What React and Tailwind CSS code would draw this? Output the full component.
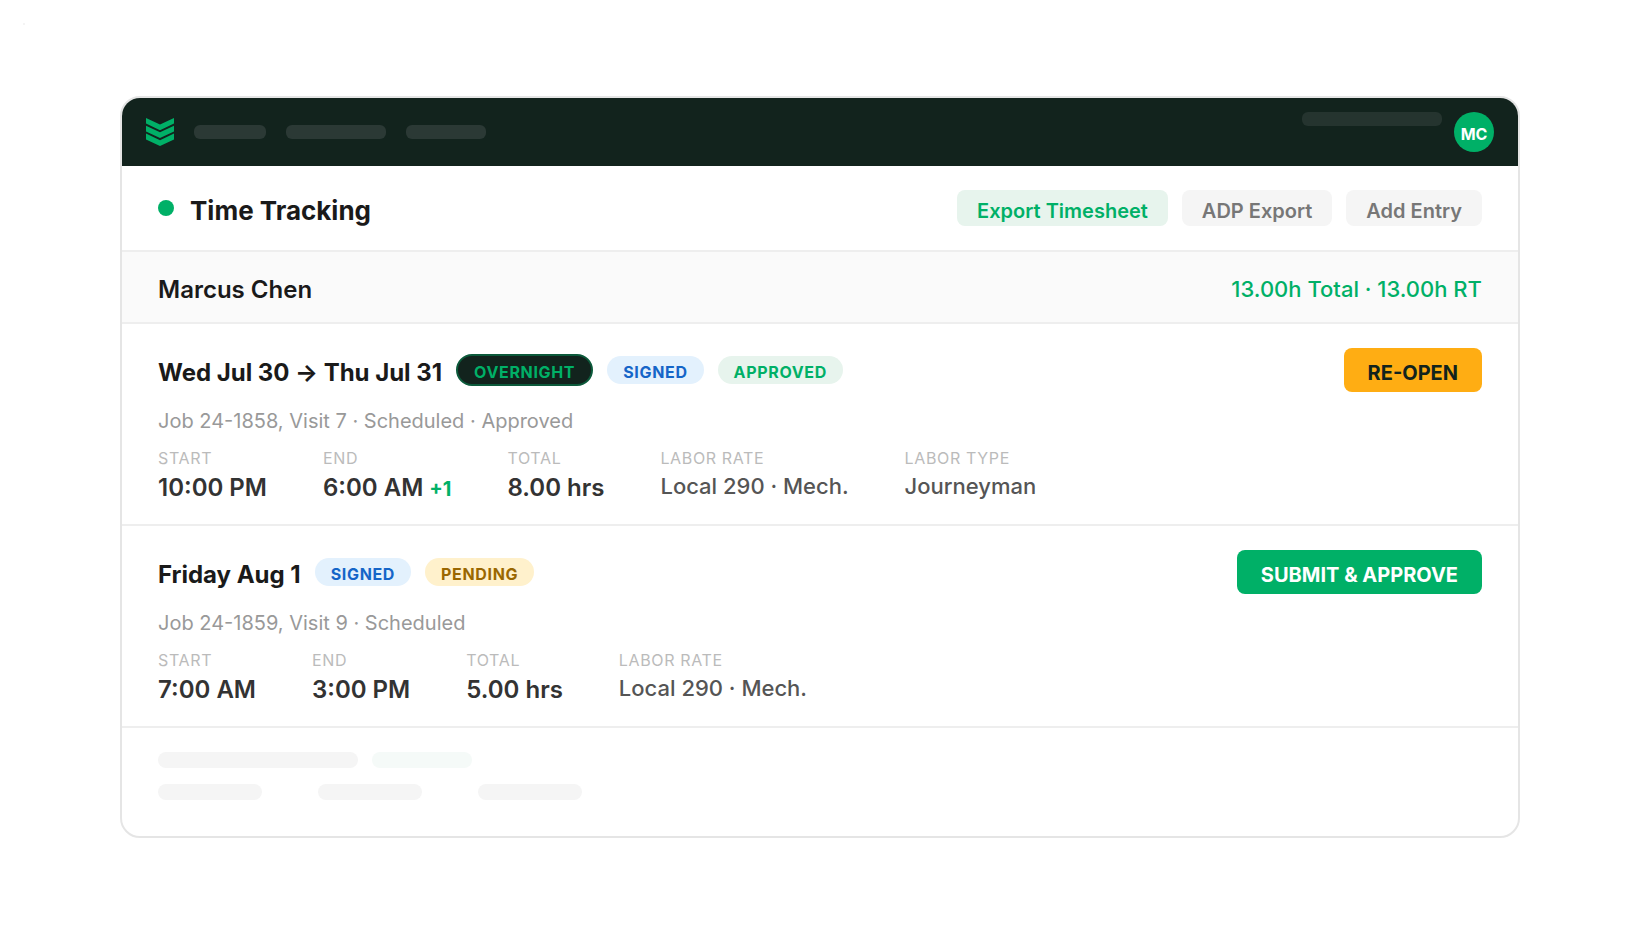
const BADGES = {
  overnight: 'h-8 border-2 border-[#0c5a3b] bg-[#12231d] text-[#00b067]',
  signed: 'h-7 bg-[#e3f1fd] text-[#1565c8]',
  approved: 'h-7 bg-[#e7f4ed] text-[#00b067]',
  pending: 'h-7 bg-[#fff1cc] text-[#9a6700]',
}

const ENTRIES = [
  {
    title: 'Wed Jul 30 → Thu Jul 31',
    badges: ['overnight', 'signed', 'approved'],
    meta: 'Job 24-1858, Visit 7 · Scheduled · Approved',
    action: 'RE-OPEN',
    actionClass: 'bg-[#ffad13] text-[#12231d]',
    fields: [
      { label: 'Start', value: '10:00 PM', strong: true },
      { label: 'End', value: '6:00 AM', extra: '+1', strong: true },
      { label: 'Total', value: '8.00 hrs', strong: true },
      { label: 'Labor rate', value: 'Local 290 · Mech.' },
      { label: 'Labor type', value: 'Journeyman' },
    ],
  },
  {
    title: 'Friday Aug 1',
    badges: ['signed', 'pending'],
    meta: 'Job 24-1859, Visit 9 · Scheduled',
    action: 'SUBMIT & APPROVE',
    actionClass: 'bg-[#00b067] text-white',
    fields: [
      { label: 'Start', value: '7:00 AM', strong: true },
      { label: 'End', value: '3:00 PM', strong: true },
      { label: 'Total', value: '5.00 hrs', strong: true },
      { label: 'Labor rate', value: 'Local 290 · Mech.' },
    ],
  },
]

function Logo() {
  return (
    <svg viewBox="0 0 28 28" className="w-7 h-7 shrink-0" fill="#00b067">
      <path d="M0 0 14 6.5 28 0V5.5L14 12.2 0 5.5Z" />
      <path d="M0 7.7 14 14.3 28 7.7V13.4L14 20 0 13.4Z" />
      <path d="M0 15.6 14 22.2 28 15.6V21.4L14 28 0 21.4Z" />
    </svg>
  )
}

function Badge({ kind }) {
  return (
    <span
      className={`flex items-center rounded-full px-4 pt-[3px] text-base leading-none font-bold tracking-[0.66px] uppercase ${BADGES[kind]}`}
    >
      {kind}
    </span>
  )
}

function Field({ field }) {
  return (
    <div>
      <div className="h-5 text-base leading-5 tracking-[0.64px] text-[#bbb] uppercase">{field.label}</div>
      {field.strong ? (
        <div className="mt-[5px] text-2xl leading-[29px] font-semibold text-[#333]">
          {field.value}
          {field.extra && <span className="ml-1.5 text-xl leading-none font-bold text-[#00b067]">{field.extra}</span>}
        </div>
      ) : (
        <div className="mt-[5px] text-[22px] leading-[27px] font-medium text-[#555]">{field.value}</div>
      )}
    </div>
  )
}

function Entry({ entry }) {
  return (
    <section className="h-[202px] border-b-2 border-[#eee] px-9 pt-6">
      <div className="flex h-11 items-center justify-between">
        <div className="flex h-11 items-center gap-3.5">
          <h2 className="pt-1.5 text-2xl leading-[30px] font-bold tracking-[-0.02px] text-[#1a1a1a]">{entry.title}</h2>
          {entry.badges.map((kind) => (
            <Badge key={kind} kind={kind} />
          ))}
        </div>
        <button className={`h-11 rounded-lg px-6 pt-1.5 text-xl leading-none font-bold ${entry.actionClass}`}>
          {entry.action}
        </button>
      </div>
      <p className="mt-[17px] text-xl leading-6 text-[#999]">{entry.meta}</p>
      <div className="mt-[15px] flex gap-14">
        {entry.fields.map((field) => (
          <Field key={field.label} field={field} />
        ))}
      </div>
    </section>
  )
}

export default function App() {
  return (
    <div className="relative flex h-[934px] w-[1640px] items-center justify-center bg-white font-['Inter',sans-serif] whitespace-nowrap">
      <span className="absolute top-[23px] left-[23px] h-0.5 w-0.5 rounded-full bg-[#f0f0f0]" />
      <div className="h-[742px] w-[1400px] overflow-hidden rounded-[20px] border-2 border-[#e5e5e5] bg-white">
        <header className="flex h-[68px] items-center justify-between bg-[#12231d] px-6">
          <div className="flex items-center gap-5">
            <Logo />
            <span className="h-3.5 w-[72px] rounded-md bg-[#2b3935]" />
            <span className="h-3.5 w-[100px] rounded-md bg-[#2b3935]" />
            <span className="h-3.5 w-20 rounded-md bg-[#2b3935]" />
          </div>
          <div className="flex items-start gap-3">
            <span className="h-3.5 w-[140px] rounded-md bg-[#25342f]" />
            <span className="flex h-10 w-10 items-center justify-center rounded-full bg-[#00b067] pt-1 text-base leading-none font-bold text-white">
              MC
            </span>
          </div>
        </header>

        <div className="flex h-[86px] items-center justify-between border-b-2 border-[#eee] px-9">
          <div className="flex items-center gap-4">
            <span className="h-4 w-4 rounded-full bg-[#00b067]" />
            <h1 className="pt-1.5 text-[26px] leading-8 font-bold text-[#1a1a1a]">Time Tracking</h1>
          </div>
          <div className="flex gap-3.5 text-xl leading-none font-semibold">
            <button className="h-9 rounded-lg bg-[#e7f4ed] px-5 pt-1.5 text-[#00b067]">Export Timesheet</button>
            <button className="h-9 rounded-lg bg-[#f5f5f5] px-5 pt-1.5 text-[#777]">ADP Export</button>
            <button className="h-9 rounded-lg bg-[#f5f5f5] px-5 pt-1.5 text-[#777]">Add Entry</button>
          </div>
        </div>

        <div className="flex h-[72px] items-center justify-between border-b-2 border-[#eee] bg-[#fafafa] px-9 pt-1">
          <span className="pt-0.5 text-2xl font-semibold text-[#1a1a1a]">Marcus Chen</span>
          <span className="text-[22px] font-medium text-[#00b067]">13.00h Total · 13.00h RT</span>
        </div>

        {ENTRIES.map((entry) => (
          <Entry key={entry.title} entry={entry} />
        ))}

        <div className="flex flex-col gap-4 px-9 pt-6">
          <div className="flex gap-3.5">
            <span className="h-4 w-[200px] rounded-full bg-[#f5f5f5]" />
            <span className="h-4 w-[100px] rounded-full bg-[#f5faf8]" />
          </div>
          <div className="flex gap-14">
            <span className="h-4 w-[104px] rounded-full bg-[#f5f5f5]" />
            <span className="h-4 w-[104px] rounded-full bg-[#f5f5f5]" />
            <span className="h-4 w-[104px] rounded-full bg-[#f5f5f5]" />
          </div>
        </div>
      </div>
    </div>
  )
}
